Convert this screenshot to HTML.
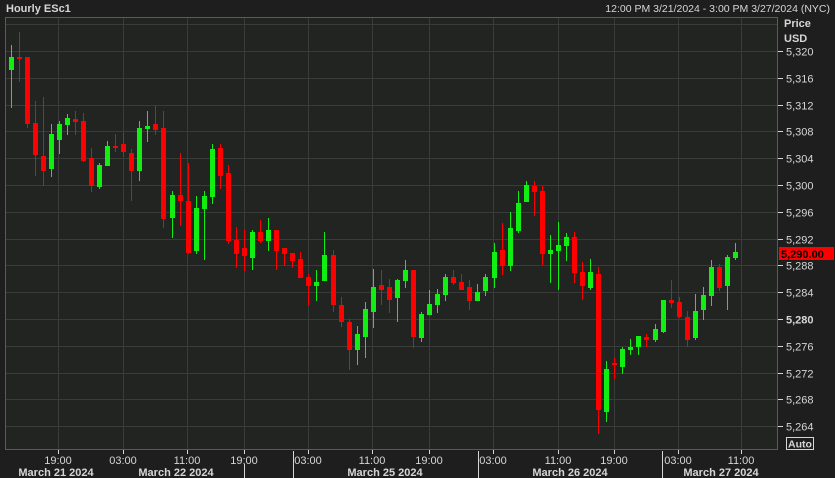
<!DOCTYPE html>
<html><head><meta charset="utf-8"><style>
html,body{margin:0;padding:0;background:#1e1e1f;width:835px;height:478px;overflow:hidden;font-family:"Liberation Sans",sans-serif;color:#d6d6d6}
svg{position:absolute;left:0;top:0}
</style></head><body>
<svg id="s" width="835" height="478" xmlns="http://www.w3.org/2000/svg" font-family="Liberation Sans, sans-serif">
<rect x="0" y="0" width="835" height="478" fill="#1e1e1f"/>
<rect x="5.5" y="17.5" width="772" height="432" fill="#222421" stroke="#5a5a5a" stroke-width="1"/>
<g id="grid" stroke="#3a3c3a" stroke-width="1"></g>
<g id="candles"></g>
<g id="axis" fill="#d6d6d6" font-size="11"></g>
<text x="6" y="12" font-size="11" font-weight="bold" fill="#d6d6d6">Hourly ESc1</text>
<text x="830" y="12" font-size="10.5" fill="#d6d6d6" text-anchor="end">12:00 PM 3/21/2024 - 3:00 PM 3/27/2024 (NYC)</text>
<text x="784" y="27" font-size="11" font-weight="bold" fill="#d6d6d6">Price</text>
<text x="784" y="42" font-size="11" font-weight="bold" fill="#d6d6d6">USD</text>
<rect x="779" y="247" width="55" height="13" fill="#ff0000"/>
<text x="781" y="258" font-size="11" font-weight="bold" fill="#000">5,290.00</text>
<rect x="786.5" y="437.5" width="27" height="12" fill="none" stroke="#d6d6d6"/>
<text x="788" y="447.5" font-size="10.5" font-weight="bold" fill="#d6d6d6">Auto</text>
<g fill="#d6d6d6" font-size="11" font-weight="bold" text-anchor="middle">
<text x="56" y="476">March 21 2024</text>
<text x="176" y="476">March 22 2024</text>
<text x="385" y="476">March 25 2024</text>
<text x="570" y="476">March 26 2024</text>
<text x="721" y="476">March 27 2024</text>
</g>
<g stroke="#d6d6d6" stroke-width="1">
<line x1="244.5" y1="464" x2="244.5" y2="478"/>
<line x1="293.5" y1="451" x2="293.5" y2="478"/>
<line x1="478.5" y1="451" x2="478.5" y2="478"/>
<line x1="662.5" y1="451" x2="662.5" y2="478"/>
</g>
</svg>
<script>
var NS="http://www.w3.org/2000/svg";
function el(t,a,p,txt){var e=document.createElementNS(NS,t);for(var k in a)e.setAttribute(k,a[k]);if(txt)e.textContent=txt;p.appendChild(e);return e;}
var grid=document.getElementById('grid'),ax=document.getElementById('axis'),cg=document.getElementById('candles');
var gx=[58,123,187,244,308,372,429,493,558,614,678,741];
var tl=["19:00","03:00","11:00","19:00","03:00","11:00","19:00","03:00","11:00","19:00","03:00","11:00"];
gx.forEach(function(x,i){el('line',{x1:x+.5,y1:18,x2:x+.5,y2:449},grid);
 el('line',{x1:x+.5,y1:450,x2:x+.5,y2:454,stroke:'#d6d6d6'},ax);
 el('text',{x:x,y:464,'text-anchor':'middle'},ax,tl[i]);});
for(var k=-1;k<=14;k++){var y=Math.round(51+26.8*k)+.5;el('line',{x1:6,y1:y,x2:777,y2:y},grid);
 if(k>=0){var p=5320-4*k;el('line',{x1:778,y1:y,x2:783,y2:y,stroke:'#d6d6d6'},ax);
 var t=el('text',{x:786,y:y+4},ax,"5,"+String(p).slice(1));if(p==5280)t.setAttribute('font-weight','bold');}}
var d=[[45,108,57,70,1],[32,82,57,58,0],[57,128,57,124,0],[101,176,123,155,0],[97,186,156,171,0],[124,177,134,169,1],[121,154,124,140,1],[114,135,118,125,1],[111,135,119,122,0],[113,162,121,161,0],
[148,192,158,186,0],[163,189,165,187,1],[141,166,146,166,1],[134,152,146,147,0],[133,157,144,152,0],[149,201,153,171,0],[121,181,128,171,1],[111,142,126,129,1],[106,135,124,130,0],[111,228,128,219,0],
[191,238,195,218,1],[153,226,195,201,0],[163,254,201,253,0],[196,254,208,251,1],[191,260,196,209,1],[144,204,149,197,1],[144,189,148,176,0],[165,244,173,241,0],[227,268,240,254,0],[230,271,248,256,0],
[230,270,232,258,1],[220,243,232,241,0],[218,251,230,241,1],[230,270,230,251,0],[248,266,248,254,0],[253,268,253,261,0],[252,278,259,278,0],[274,305,277,286,0],[270,301,282,286,1],[232,281,255,281,1],
[250,312,255,305,0],[297,327,305,322,0],[319,370,322,350,0],[326,365,334,350,1],[302,358,309,337,1],[269,328,287,312,1],[270,305,285,290,0],[279,313,287,300,0],[279,322,280,298,1],[260,288,270,281,1],
[270,348,270,337,0],[312,342,314,338,1],[290,315,304,315,1],[289,313,294,305,1],[274,301,277,295,1],[270,285,277,283,0],[274,290,282,290,0],[280,310,287,301,0],[284,301,292,301,1],[274,296,277,291,1],
[243,288,252,278,1],[223,275,250,266,0],[212,271,228,266,1],[191,233,203,231,1],[181,202,185,202,1],[181,216,186,192,0],[186,265,191,254,0],[235,283,250,254,1],[222,290,245,251,1],[233,261,237,246,1],
[232,283,237,273,0],[262,300,272,286,0],[259,290,272,288,1],[267,434,274,410,0],[361,422,369,412,1],[357,379,363,365,0],[347,374,349,367,1],[339,355,347,350,1],[336,355,336,347,1],[334,347,337,340,0],
[324,342,329,340,1],[300,333,300,332,1],[280,308,300,303,0],[297,318,302,317,0],[311,347,317,340,0],[294,340,311,338,1],[287,320,295,310,1],[260,306,267,296,1],[264,291,267,288,0],[255,310,257,286,1],[243,260,252,258,1]];
d.forEach(function(c,i){var cx=Math.round(10.5+8.05*(i)),col=c[4]?'#11ee11':'#ff0000';
 el('rect',{x:cx,y:c[0],width:1,height:c[1]-c[0],fill:col},cg);
 el('rect',{x:cx-2,y:c[2],width:5,height:Math.max(2,c[3]-c[2]),fill:col},cg);});
</script>
</body></html>
